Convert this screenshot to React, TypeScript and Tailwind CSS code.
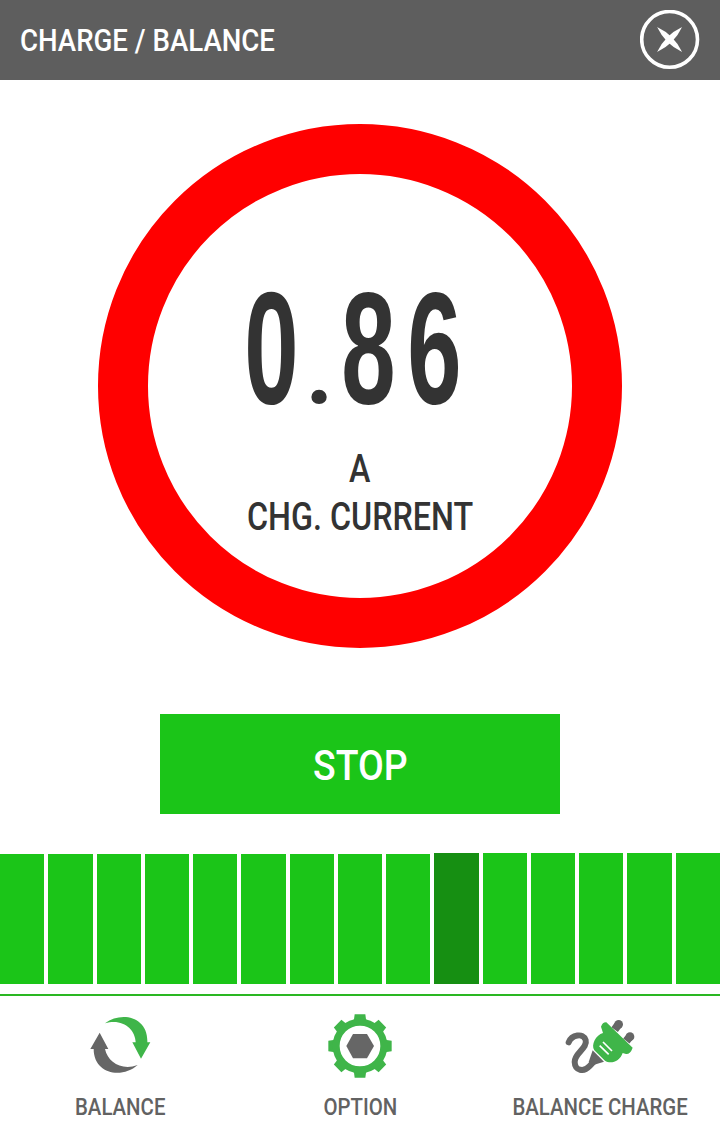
import type { ReactNode } from "react"

const cells = Array.from({ length: 15 }, (_, i) => ({ id: i + 1, active: i === 9, raised: i >= 9 }))

function CloseIcon() {
  return (
    <svg viewBox="0.4 0.6 60 60" className="h-[60px] w-[60px]" fill="none">
      <circle cx="30" cy="30" r="27.9" stroke="#fff" strokeWidth="3.6" />
      <path fill="#fff" d="M17.5 17.5 Q34.5 25.5 42.5 42.5 Q25.5 34.5 17.5 17.5Z" />
      <path fill="#fff" d="M42.5 17.5 Q34.5 34.5 17.5 42.5 Q25.5 25.5 42.5 17.5Z" />
    </svg>
  )
}

function BalanceIcon() {
  return (
    <svg viewBox="72 18 216 204" className="h-[68px] w-[72px]">
      <path fill="#3fb549" d="M135 55 C184 18 265 35 262 112 L271 112 L243 161 L217 112 L227 112 C226 72 187 39 135 55Z" />
      <path fill="#666" d="M119 83 L145 132 L135 132 C143 171 185 198 233 180 C185 223 101 207 101 132 L91 132Z" />
    </svg>
  )
}

function OptionIcon() {
  return (
    <svg viewBox="72 18 216 204" className="h-[68px] w-[72px]">
      <g fill="#3fb549">
        {[0, 45, 90, 135, 180, 225, 270, 315].map((angle) => (
          <path key={angle} transform={`rotate(${angle} 180 123)`} d="M152 56 L162 43 L164 28 L196 28 L198 43 L208 56Z" />
        ))}
      </g>
      <circle cx="180" cy="123" r="71.5" fill="none" stroke="#3fb549" strokeWidth="21" />
      <path fill="#666" d="M159 87 H201 L222 123 L201 160 H159 L139 123Z" />
    </svg>
  )
}

function ChargeIcon() {
  return (
    <svg viewBox="192 18 216 204" className="h-[68px] w-[72px]">
      <path
        d="M206 112 C215 90 250 82 257 105 C264 130 223 144 224 171 C225 198 252 202 268 184 L289 162"
        fill="none"
        stroke="#666"
        strokeWidth="18"
        strokeLinecap="round"
      />
      <path fill="#666" d="M278 136 L312 170 L278 181 L266 171Z" />
      <path d="M344 74 L355 59 M379 108 L391 93" stroke="#666" strokeWidth="24" />
      <circle cx="356" cy="58" r="13" fill="#666" />
      <circle cx="390" cy="95" r="13" fill="#666" />
      <path
        fill="#3fb549"
        d="M303 65 Q308 51 319 52 L398 128 Q391 148 378 147 L368 144 C360 169 332 179 315 167 L283 136 C272 119 288 90 309 84Z"
      />
      <path d="M309 111 L336 138 M299 122 L326 148" stroke="#fff" strokeWidth="5" />
    </svg>
  )
}

function Digit({ children }: { children: string }) {
  return (
    <span className="flex w-[66px] justify-center">
      <span className="scale-x-[0.61]">{children}</span>
    </span>
  )
}

function Tab({ icon, children }: { icon: ReactNode; children: ReactNode }) {
  return (
    <button className="flex flex-col items-center pt-[15px] text-2xl font-medium text-[#626262]">
      {icon}
      <span className="mt-3 h-8 scale-x-[0.85] leading-8 whitespace-nowrap">{children}</span>
    </button>
  )
}

export default function App() {
  return (
    <div className="flex h-[1135px] w-[720px] flex-col overflow-hidden bg-white font-['Roboto',sans-serif]">
      <header className="flex h-20 items-center justify-between bg-[#5e5e5e] pr-5 pl-5">
        <h1 className="origin-left scale-x-[0.863] text-[32px] font-medium whitespace-nowrap text-white">CHARGE / BALANCE</h1>
        <button aria-label="Close">
          <CloseIcon />
        </button>
      </header>

      <main className="flex flex-col items-center pt-11">
        <div className="flex h-[524px] w-[524px] flex-col items-center rounded-full border-[50px] border-[#ff0000] pt-[94px] text-[#333]">
          <div className="flex h-40 items-baseline pr-[15px] font-['Liberation_Sans',sans-serif] text-[160px] leading-[160px] font-bold">
            <Digit>0</Digit>
            <span className="flex w-[31px] justify-center font-['Roboto',sans-serif] text-[96px] leading-none">.</span>
            <Digit>8</Digit>
            <Digit>6</Digit>
          </div>
          <div className="mt-[17px] scale-x-[0.85] text-[38px] leading-[48px] font-medium">A</div>
          <div className="scale-x-[0.85] text-[38px] leading-[48px] font-medium whitespace-nowrap">CHG. CURRENT</div>
        </div>

        <button className="mt-[66px] flex h-[100px] w-[400px] items-center justify-center bg-[#1bc518] text-white">
          <span className="scale-x-[0.87] pt-0.5 text-[43px] font-medium">STOP</span>
        </button>
      </main>

      <div className="mt-[39px] grid h-[131px] grid-cols-15 items-end gap-1">
        {cells.map((cell) => (
          <div
            key={cell.id}
            className={`${cell.raised ? "h-[131px]" : "h-[130px]"} ${cell.active ? "bg-[#168f12]" : "bg-[#1bc518]"}`}
          />
        ))}
      </div>

      <nav className="mt-2.5 grid flex-1 grid-cols-3 border-t-2 border-[#2ab722]">
        <Tab icon={<BalanceIcon />}>BALANCE</Tab>
        <Tab icon={<OptionIcon />}>OPTION</Tab>
        <Tab icon={<ChargeIcon />}>BALANCE CHARGE</Tab>
      </nav>
    </div>
  )
}
